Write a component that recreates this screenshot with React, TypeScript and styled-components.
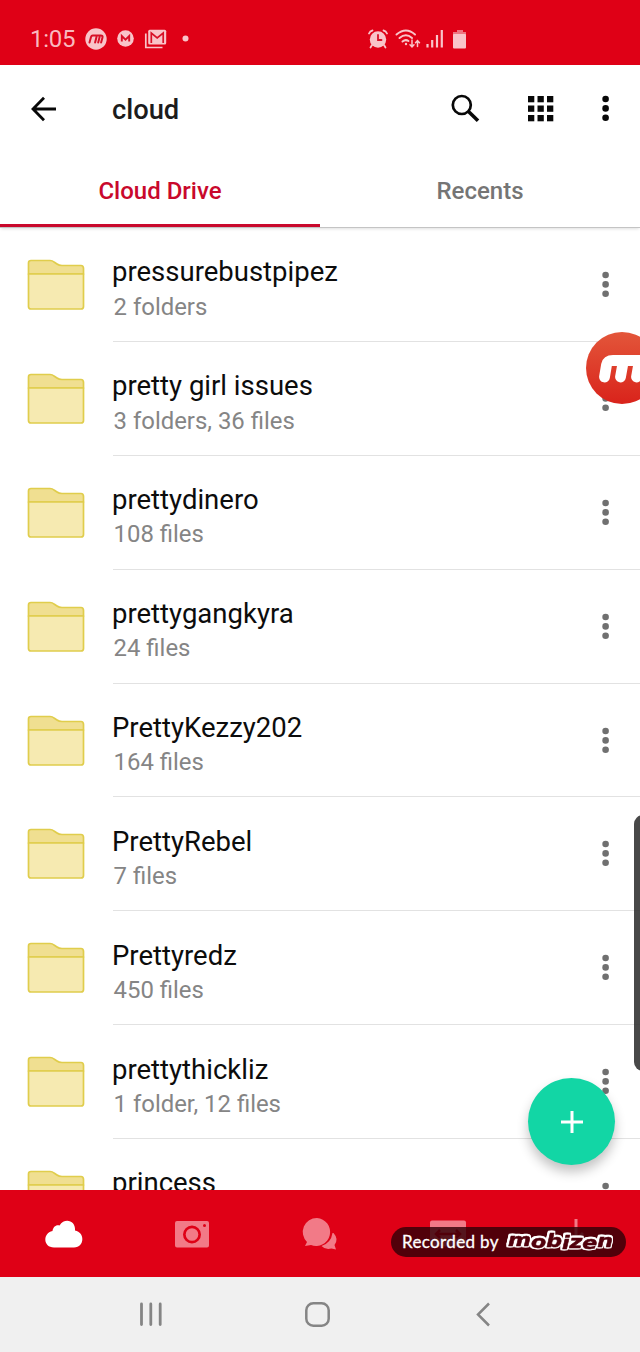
import React from "react";
import styled, { createGlobalStyle, css } from "styled-components";

const GlobalStyle = createGlobalStyle`
  * { box-sizing: border-box; }
  body { margin: 0; background: #fff; font-family: Roboto, "Liberation Sans", sans-serif; }
  svg { display: block; overflow: visible; flex: none; }
`;

const Screen = styled.main`
  position: relative;
  width: 640px;
  height: 1352px;
  display: flex;
  flex-direction: column;
  overflow: hidden;
  background: #fff;
`;

const StatusBar = styled.header`
  height: 65px;
  flex: none;
  display: flex;
  align-items: center;
  padding: 12px 0 0 30px;
  background: #df0016;
  color: #f9b9bf;
`;

const Clock = styled.span`
  width: 55px;
  font-size: 24px;
  line-height: 28px;
  letter-spacing: -0.3px;
  white-space: nowrap;
`;

const Toolbar = styled.div`
  height: 87px;
  flex: none;
  display: flex;
  align-items: center;
  padding-left: 30px;
`;

const Title = styled.h1`
  margin: 2px 0 0 54px;
  width: 338px;
  font-size: 27.3px;
  line-height: 32px;
  font-weight: 500;
  color: #1c1c1c;
`;

const Tabs = styled.nav`
  height: 76px;
  flex: none;
  display: flex;
  box-shadow: 0 2px 3px -1px rgba(0, 0, 0, 0.13);
  border-bottom: 1px solid #c4c4c4;
`;

const Tab = styled.div<{ $active?: boolean }>`
  flex: 1;
  height: 75px;
  padding-top: 25px;
  text-align: center;
  font-size: 24px;
  line-height: 28px;
  font-weight: 500;
  color: #757575;
  ${(p) => p.$active && css`
    color: #c9082c;
    border-bottom: 3px solid #c9082c;
  `}
`;

const List = styled.section`
  flex: 1;
  min-height: 0;
  padding-top: 0.2px;
  overflow: hidden;
`;

const Row = styled.div`
  height: 113.86px;
  display: flex;
  padding-left: 27px;
`;

const FolderSlot = styled.div`
  width: 86px;
  padding-top: 31px;
`;

const RowBody = styled.div`
  flex: 1;
  display: flex;
  justify-content: space-between;
  border-bottom: 1.5px solid #e2e2e2;
`;

const Name = styled.div`
  margin-top: 28.3px;
  margin-left: -1px;
  font-size: 27.5px;
  line-height: 32px;
  color: #0c0c0c;
  white-space: nowrap;
`;

const Meta = styled.div`
  margin: 4.2px 0 0 0.6px;
  font-size: 23.9px;
  line-height: 28px;
  color: #858585;
  white-space: nowrap;
`;

const RowMenu = styled.div`
  width: 8px;
  margin: 43px 30px 0 0;
`;

const BottomNav = styled.nav`
  height: 87px;
  flex: none;
  display: grid;
  grid-template-columns: repeat(5, 128px);
  place-items: center;
  background: #df0016;
`;

const SystemNav = styled.footer`
  height: 75px;
  flex: none;
  display: flex;
  align-items: center;
  padding-left: 138px;
  background: #f0f0f0;
`;

const Gap = styled.span<{ $w: number }>`
  flex: none;
  width: ${(p) => p.$w}px;
`;

const AddButton = styled.button`
  position: absolute;
  left: 528px;
  top: 1078px;
  width: 87px;
  height: 87px;
  padding: 0;
  display: grid;
  place-items: center;
  border: 0;
  border-radius: 50%;
  background: #12d6a5;
  box-shadow: 0 7px 12px rgba(0, 0, 0, 0.24);
`;

const RecorderBubble = styled.div`
  position: absolute;
  left: 586px;
  top: 332px;
  width: 72px;
  height: 72px;
  border-radius: 50%;
  background: linear-gradient(#e3563a, #d9231b);
`;

const EdgeHandle = styled.div`
  position: absolute;
  left: 634px;
  top: 815px;
  width: 20px;
  height: 256px;
  border-radius: 9px;
  background: rgba(47, 47, 47, 0.88);
`;

const Watermark = styled.div`
  position: absolute;
  left: 391px;
  top: 1227px;
  width: 235px;
  height: 30px;
  border-radius: 15px;
  display: flex;
  align-items: center;
  padding-left: 11px;
  background: rgba(50, 0, 7, 0.82);
  color: #fff;
`;

const WatermarkText = styled.span`
  width: 103px;
  font-family: Lato, sans-serif;
  font-size: 17px;
  line-height: 22px;
  letter-spacing: 0.35px;
  -webkit-text-stroke: 0.3px #fff;
  white-space: nowrap;
`;

const Wordmark = styled.svg`
  text {
    font: italic bold 17px "DejaVu Sans", sans-serif;
    fill: #51000c;
    stroke: #51000c;
    stroke-width: 0.5px;
    stroke-linejoin: round;
    filter: drop-shadow(1.3px 0 0 #fff) drop-shadow(-1.3px 0 0 #fff) drop-shadow(0 1.3px 0 #fff) drop-shadow(0 -1.3px 0 #fff);
  }
`;

const Dots = ({ color }: { color: string }) => (
  <svg width="8" height="27" viewBox="0 0 8 27" fill={color}>
    <circle cx="3.600" cy="4" r="3.300" />
    <circle cx="3.600" cy="13.400" r="3.300" />
    <circle cx="3.600" cy="22.800" r="3.300" />
  </svg>
);

const Folder = () => (
  <svg width="58" height="52" viewBox="0 0 58 52" stroke="#e0cd4c" strokeWidth="1.7" strokeLinejoin="round">
    <path d="M1.500 15V4Q1.500 1.500 4 1.500H23Q25.500 1.500 27 3L30 5Q32 6.500 35 6.500H54Q56.500 6.500 56.500 9.500V15Z" fill="#f0df91" />
    <path d="M1.500 15H56.500V47.500Q56.500 50 54 50H4Q1.500 50 1.500 47.500Z" fill="#f6eab1" />
  </svg>
);

const StatusIcons = () => (
  <>
    <svg width="22" height="22" viewBox="0 0 22 22">
      <circle cx="11" cy="11" r="10.700" fill="#f9c4c9" />
      <path d="M4.500 14.500L6 9Q6.400 7.600 7.800 7.600H15.800Q18 7.600 17.500 9.400L16.100 14.500M10.100 14.500L11.500 9M13.200 14.500L14.600 9" fill="none" stroke="#d81027" strokeWidth="2" strokeLinecap="round" />
    </svg>
    <Gap $w={10} />
    <svg width="17" height="17" viewBox="0 0 17 17">
      <circle cx="8.500" cy="8.500" r="8.300" fill="#f9c4c9" />
      <path d="M4.800 11.500V6L8.500 9.600L12.200 6V11.500" fill="none" stroke="#d81027" strokeWidth="1.900" />
    </svg>
    <Gap $w={10} />
    <svg width="23" height="20" viewBox="0 0 23 20" fill="none">
      <path d="M1.800 4.500V18.500H18.500" stroke="#f9c4c9" strokeWidth="1.700" />
      <rect x="4.200" y="0.800" width="18" height="14.700" rx="1.500" fill="#f9c4c9" />
      <path d="M7.300 14V4L13.200 8.800L19.200 4V14" stroke="#d81027" strokeWidth="1.700" />
    </svg>
    <Gap $w={15} />
    <svg width="7" height="7"><circle cx="3.500" cy="3.500" r="3" fill="#f9c4c9" /></svg>
    <Gap $w={179} />
    <svg width="20" height="20" viewBox="0 0 20 20" fill="none" stroke="#f9c4c9" strokeWidth="1.800" strokeLinecap="round">
      <circle cx="10" cy="10.500" r="8.200" fill="#f9c4c9" stroke="none" />
      <path d="M1 4.500Q2 2 4.500 1.500M15.500 1.500Q18 2 19 4.500M4 16L2.500 18.500M16 16L17.500 18.500" />
      <path d="M10 6V11H13.500" stroke="#d81027" />
    </svg>
    <Gap $w={7} />
    <svg width="25" height="20" viewBox="0 0 25 20" fill="none" stroke="#f9c4c9" strokeWidth="2" strokeLinecap="round">
      <path d="M1.500 5.500Q11 -2.500 20 5.500M4.500 9Q11 3.500 17 9M7.500 12.500Q10.500 10 13.500 12" />
      <circle cx="11" cy="15" r="1.200" fill="#f9c4c9" stroke="none" />
      <path d="M17 11V17.500M15 15.700L17 17.800L19 15.700M22.500 17.500V12M20.500 13.800L22.500 11.700L24.500 13.800" strokeWidth="1.500" />
    </svg>
    <Gap $w={6} />
    <svg width="18" height="19" viewBox="0 0 18 19" stroke="#f9c4c9" strokeWidth="2.200">
      <path d="M1.500 15V18.500M6.200 11V18.500M11 6V18.500M15.800 1V18.500" />
    </svg>
    <Gap $w={9} />
    <svg width="14" height="20" viewBox="0 0 14 20">
      <path d="M4 1H10V3H13V6H0V3H4Z" fill="#ee7480" />
      <rect y="5" width="13" height="14.500" rx="1" fill="#f9c4c9" />
    </svg>
  </>
);

const folders = [
  ["pressurebustpipez", "2 folders"],
  ["pretty girl issues", "3 folders, 36 files"],
  ["prettydinero", "108 files"],
  ["prettygangkyra", "24 files"],
  ["PrettyKezzy202", "164 files"],
  ["PrettyRebel", "7 files"],
  ["Prettyredz", "450 files"],
  ["prettythickliz", "1 folder, 12 files"],
  ["princess", ""],
];

export default function App() {
  return (
    <Screen>
      <GlobalStyle />
      <StatusBar>
        <Clock>1:05</Clock>
        <StatusIcons />
      </StatusBar>
      <Toolbar>
        <svg width="28" height="26" viewBox="0 0 28 26" fill="none" stroke="#080808" strokeWidth="2.800">
          <path d="M26 13H3M14 1.800L3 13L14 24.200" />
        </svg>
        <Title>cloud</Title>
        <svg width="30" height="28" viewBox="0 0 30 28" fill="none" stroke="#080808">
          <circle cx="11.800" cy="10" r="9" strokeWidth="2.700" />
          <path d="M18.500 16.500L28 25.800" strokeWidth="3.600" />
        </svg>
        <Gap $w={48} />
        <svg width="26" height="26" viewBox="0 0 26 26" fill="#080808">
          {[0, 9.5, 19].map((y) => [0, 9.5, 19].map((x) => (
            <rect key={`${x}-${y}`} x={x} y={y} width="6.300" height="6.300" />
          )))}
        </svg>
        <Gap $w={48} />
        <Dots color="#080808" />
      </Toolbar>
      <Tabs>
        <Tab $active>Cloud Drive</Tab>
        <Tab>Recents</Tab>
      </Tabs>
      <List>
        {folders.map(([name, meta]) => (
          <Row key={name}>
            <FolderSlot><Folder /></FolderSlot>
            <RowBody>
              <div>
                <Name>{name}</Name>
                <Meta>{meta}</Meta>
              </div>
              <RowMenu><Dots color="#707070" /></RowMenu>
            </RowBody>
          </Row>
        ))}
      </List>
      <BottomNav>
        <svg width="38" height="28" viewBox="0 0 38 28" fill="#fff">
          <path d="M9 27.500C-2 27.500-2.500 13 7.500 11C8 7 11 4.500 14.500 5.500C20-3 31 1 30 10.500C40 12 40 27.500 29 27.500Z" />
        </svg>
        <svg width="34" height="28" viewBox="0 0 34 28">
          <path fillRule="evenodd" fill="#f27a87" d="M2 1H32Q34 1 34 3V25.500Q34 27.500 32 27.500H2Q0 27.500 0 25.500V3Q0 1 2 1ZM17 5.500A9 9 0 1 0 17 23.500A9 9 0 1 0 17 5.500ZM29.500 4A1.500 1.500 0 1 0 29.500 7A1.500 1.500 0 1 0 29.500 4Z" />
          <circle cx="17" cy="14.500" r="6.300" fill="#f27a87" />
        </svg>
        <svg width="34" height="32" viewBox="0 0 34 32" fill="#f27a87">
          <path d="M30.500 15Q36 21 31.500 27L33 31.500L28.500 30.500Q22 32 18.500 28Q28 25 29.500 15Z" />
          <path d="M14 0A14 14 0 1 1 8 27L2 28L4 24A14 14 0 0 1 14 0Z" />
        </svg>
        <svg width="36" height="27" viewBox="0 0 36 27">
          <rect y="0.500" width="36" height="26" rx="2" fill="#f27a87" />
          <path d="M6 14H30M10 10L6 14L10 18M26 10L30 14L26 18" fill="none" stroke="#df0016" strokeWidth="2.500" />
        </svg>
        <svg width="28" height="30" viewBox="0 0 28 30" fill="none" stroke="#f27a87" strokeWidth="3">
          <path d="M14 0V21M7 14L14 21L21 14" />
        </svg>
      </BottomNav>
      <SystemNav>
        <svg width="25" height="25" viewBox="0 0 25 25" stroke="#858585" strokeWidth="2.800" strokeLinecap="round">
          <path d="M3.500 2V22.500M12.800 2V22.500M22.200 2V22.500" />
        </svg>
        <Gap $w={141.5} />
        <svg width="25" height="25" viewBox="0 0 25 25" fill="none" stroke="#858585" strokeWidth="2.500">
          <rect x="1.300" y="1.300" width="22.400" height="22.400" rx="7" />
        </svg>
        <Gap $w={146.5} />
        <svg width="15" height="25" viewBox="0 0 15 25" fill="none" stroke="#858585" strokeWidth="2.500">
          <path d="M13 1.500L2 12.500L13 23.500" />
        </svg>
      </SystemNav>
      <RecorderBubble>
        <svg width="72" height="72" viewBox="0 0 72 72" fill="none" stroke="#fff" strokeWidth="10.800" strokeLinecap="round" strokeLinejoin="round">
          <path d="M18.500 45L20.500 33Q21.500 28.500 27 28.500H57Q63 28.500 62 33L60 45M34.500 45L37 31M50.500 45L53 31" />
        </svg>
      </RecorderBubble>
      <EdgeHandle />
      <AddButton aria-label="Add">
        <svg width="24" height="24" viewBox="0 0 24 24" stroke="#fff" strokeWidth="3">
          <path d="M1 12H23M12 1V23" />
        </svg>
      </AddButton>
      <Watermark>
        <WatermarkText>Recorded by</WatermarkText>
        <Wordmark width="112" height="22" viewBox="0 0 112 22">
          <text x="3" y="15" dy="0 2 -1 2 -1 1 -2" textLength="105" lengthAdjust="spacingAndGlyphs">mobizen</text>
        </Wordmark>
      </Watermark>
    </Screen>
  );
}
